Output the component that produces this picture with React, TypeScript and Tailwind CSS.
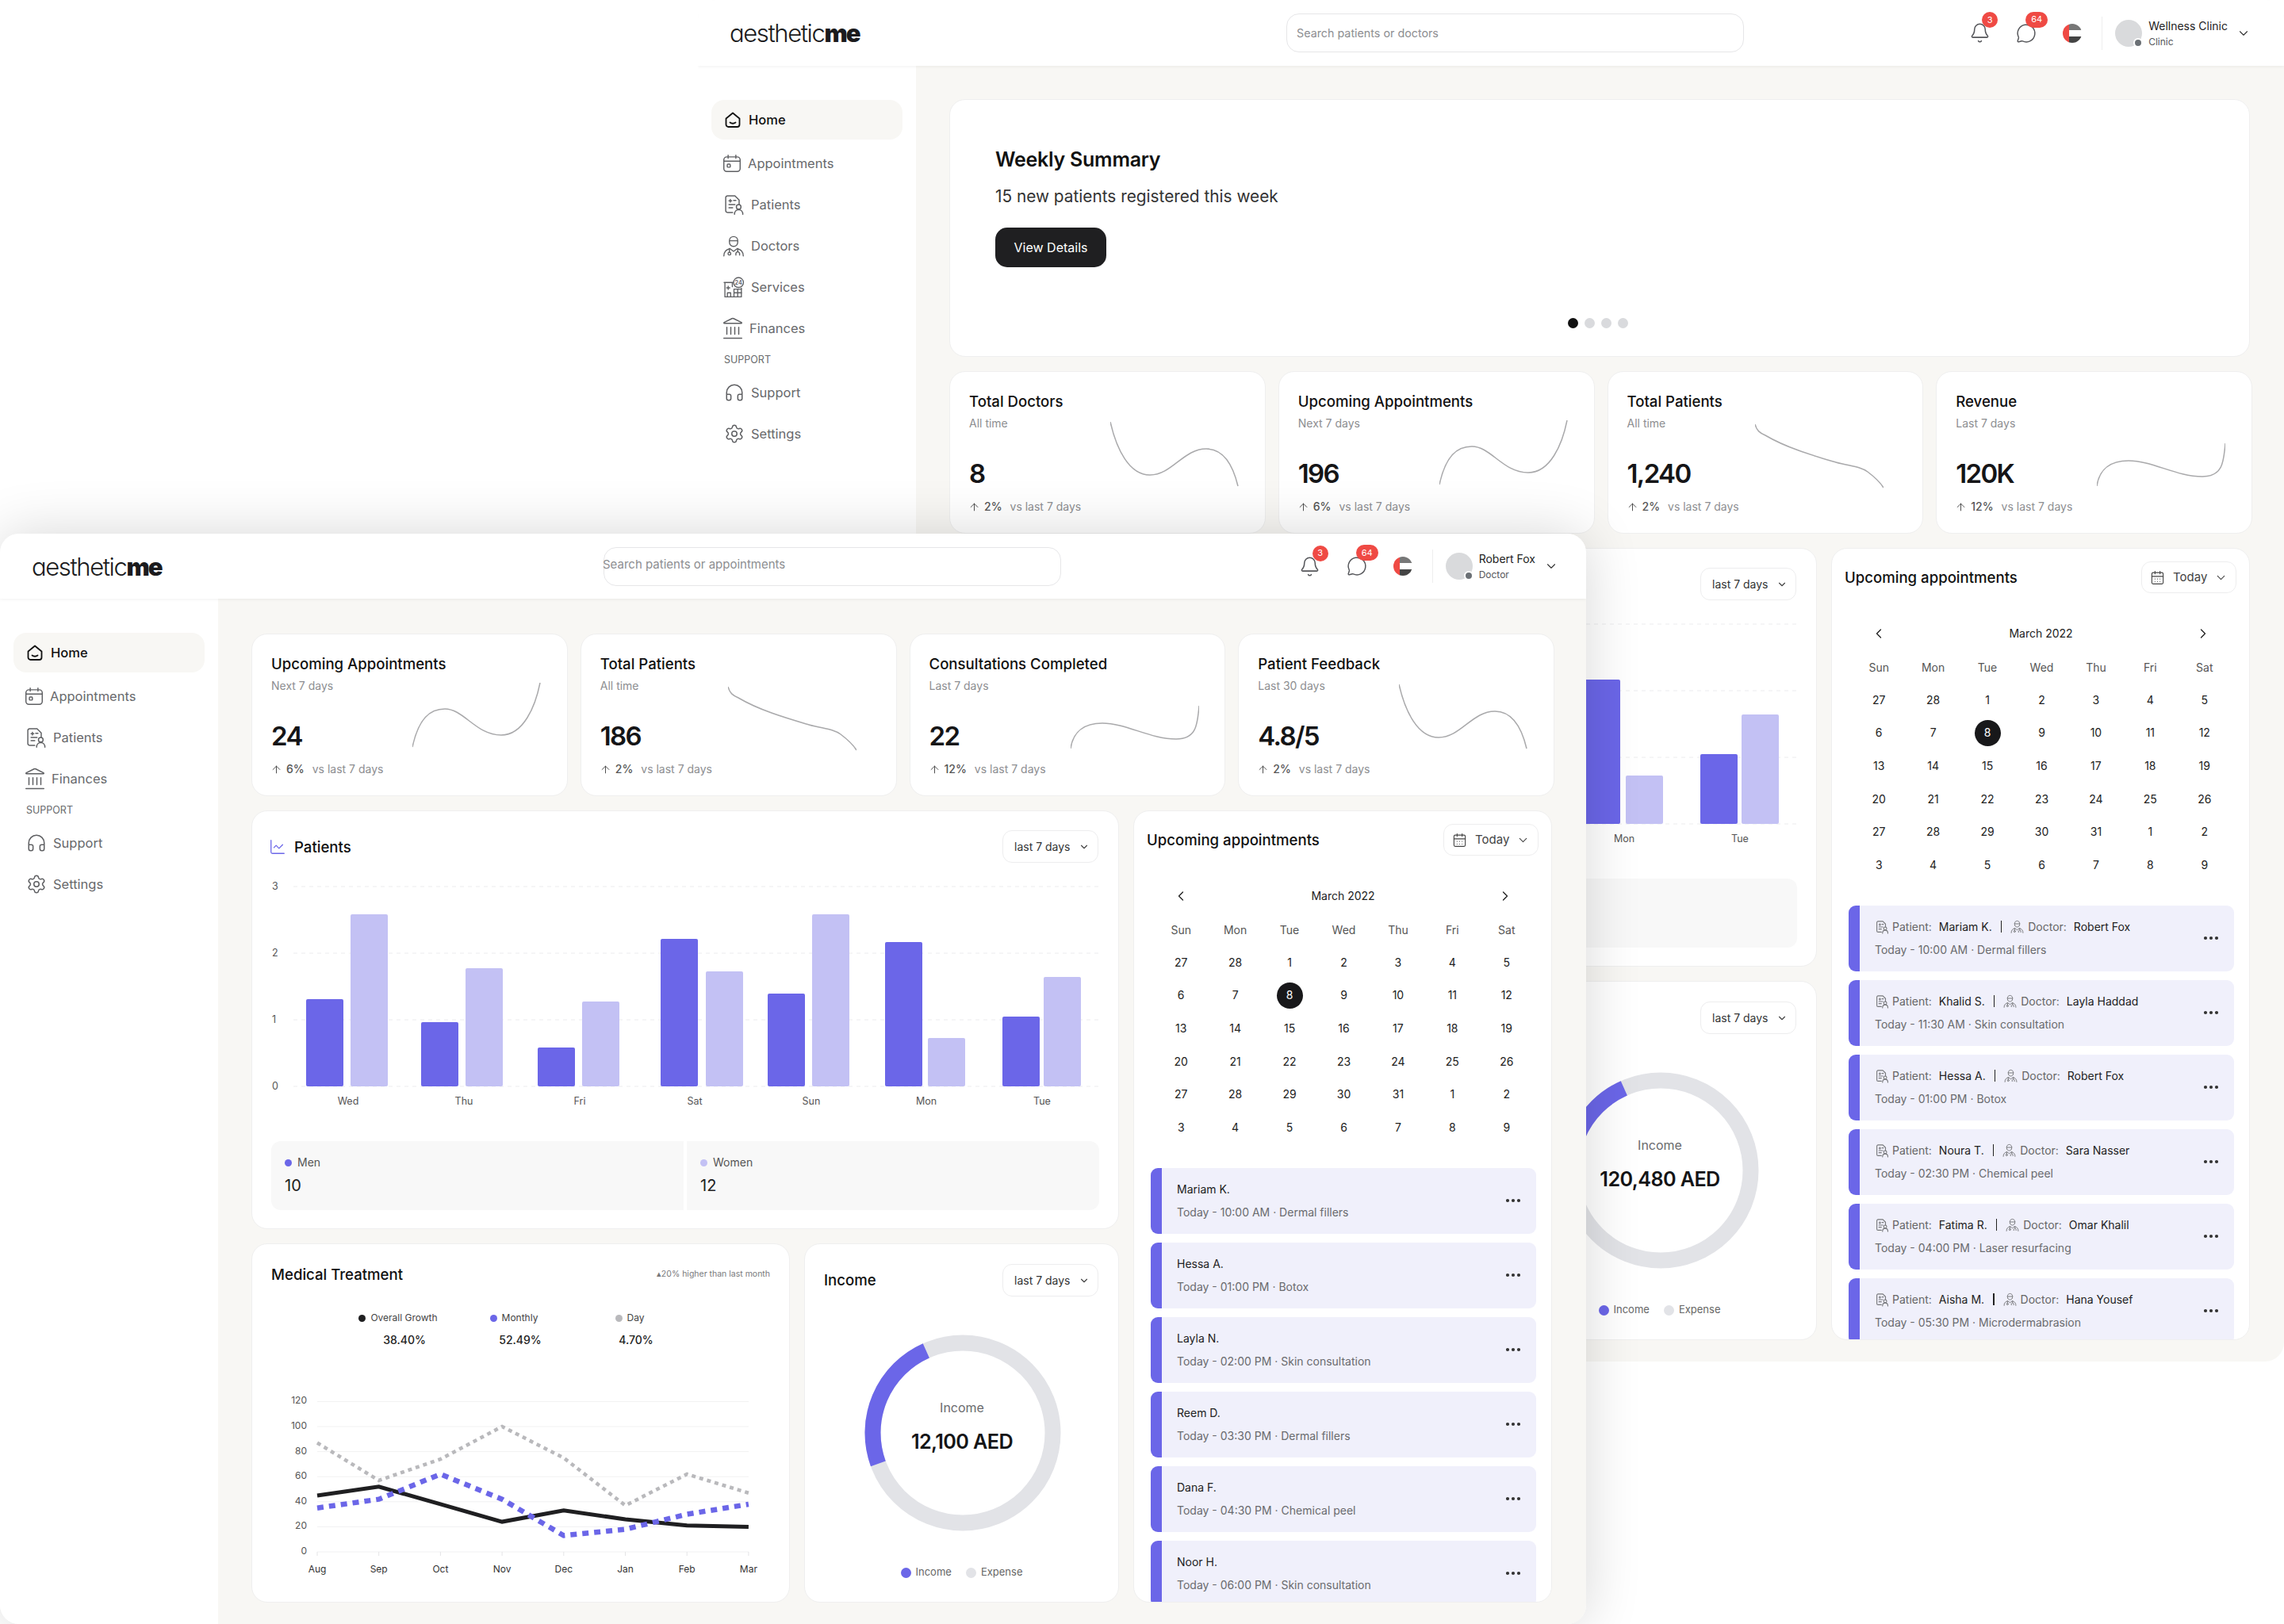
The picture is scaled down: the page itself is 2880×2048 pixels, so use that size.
import React from "react"
import { ArrowUp, Bell, CalendarDays, ChartLine, ChevronDown, ChevronLeft, ChevronRight, Ellipsis, Headphones, Landmark, MessageCircle, Settings } from "lucide-react"

const IC = { fill: "none", stroke: "currentColor", strokeWidth: 1.5, strokeLinecap: "round", strokeLinejoin: "round" } as const

const HomeIcon = () => (
    <svg width="24" height="24" viewBox="0 0 24 24" {...IC} strokeWidth={1.8}>
        <path d="M3.5 10.5 12 3.500l8.500 7V18a3 3 0 0 1-3 3h-11a3 3 0 0 1-3-3z" />
        <path d="M8.500 15.500c2 1.400 5 1.400 7 0" />
    </svg>
)

const CalendarIcon = () => (
    <svg width="26" height="26" viewBox="0 0 24 24" {...IC} strokeWidth={1.35}>
        <rect x="2.500" y="4.500" width="19" height="17" rx="3.500" />
        <path d="M2.500 9.500h19M7.500 2.500v3.500M16.500 2.500v3.500" />
        <rect x="6.500" y="13" width="3.500" height="3.500" rx="0.800" />
    </svg>
)

const PatientIcon = ({ size = 28 }: { size?: number }) => (
    <svg width={size} height={size} viewBox="0 0 24 24" {...IC} strokeWidth={size > 20 ? 1.25 : 1.5}>
        <path d="M11 20.500H5.500a2 2 0 0 1-2-2v-14a2 2 0 0 1 2-2h8l4.500 4.500v5" />
        <path d="M7 8h3M8.500 6.500v3M12 7.500h2.500M7 12h6.500M7 15.500h4" />
        <circle cx="17.500" cy="14.500" r="2.500" />
        <path d="M13 22.500c0-3 2-5 4.500-5s4.500 2 4.500 5" />
    </svg>
)

const DoctorIcon = ({ size = 28 }: { size?: number }) => (
    <svg width={size} height={size} viewBox="0 0 24 24" {...IC} strokeWidth={size > 20 ? 1.2 : 1.4}>
        <path d="M7.500 6.500C7.500 3.800 9.500 2 12 2s4.500 1.800 4.500 4.500zM7.500 6.500v1.500c0 2.800 2 4.700 4.500 4.700s4.500-1.900 4.500-4.700V6.500" />
        <path d="M1.500 23c0-4.500 2.500-7 6.500-8l4 3 4-3c4 1 6.500 3.500 6.500 8" />
        <path d="M7.500 15v4M16.500 15v3l2 2v2M16.500 18l-2 2v2" />
        <circle cx="7.500" cy="20.500" r="1.500" />
    </svg>
)

const ServicesIcon = () => (
    <svg width="27" height="27" viewBox="0 0 26 26" {...IC} strokeWidth={1.3}>
        <path d="M1 7h11M2 7v17.500h20V14M11 7v5" />
        <path d="M6 11.500v4M4 13.500h4M5 24.500v-5h4v5M13 24.500V15h9M13 19.500h9M17.500 15v9.500" />
        <circle cx="18.500" cy="7" r="6" fill="#fff" />
        <text x="18.500" y="9.500" textAnchor="middle" fontSize="7" fontWeight="600" fill="currentColor" stroke="none">24</text>
    </svg>
)

type NavItem = { label: string; icon: React.ReactNode; box: string }

const NAV_TOP: Record<string, NavItem> = {
    appointments: { label: "Appointments", icon: <CalendarIcon />, box: "-ml-[3px] w-[33px]" },
    patients: { label: "Patients", icon: <PatientIcon />, box: "-ml-[2px] w-[36px]" },
    doctors: { label: "Doctors", icon: <DoctorIcon />, box: "-ml-[2px] w-[36px]" },
    services: { label: "Services", icon: <ServicesIcon />, box: "-ml-px w-[35px]" },
    finances: { label: "Finances", icon: <Landmark size={30} strokeWidth={1.2} />, box: "-ml-1 w-[36px]" },
}

const NavRow = ({ item }: { item: NavItem }) => (
    <div className="flex h-[52px] items-center pl-[33px] text-[16.5px] text-[#68696c]">
        <div className={`flex shrink-0 items-center text-[#5f6063] ${item.box}`}>{item.icon}</div>
        {item.label}
    </div>
)

function Sidebar({ items }: { items: string[] }) {
    return (
        <div className="w-[275px] shrink-0 bg-white pt-[43px]">
            <div className="mx-[17px] mb-[4px] flex h-[50px] items-center rounded-[16px] bg-[#f8f7f4] pl-[15px] text-[16.5px] font-medium text-[#111]">
                <div className="w-[32px]"><HomeIcon /></div>
                Home
            </div>
            {items.map(k => <NavRow key={k} item={NAV_TOP[k]} />)}
            <div className="flex h-[29px] items-center pl-[33px] text-[12.5px] text-[#68696c]">SUPPORT</div>
            <NavRow item={{ label: "Support", icon: <Headphones size={26} strokeWidth={1.4} />, box: "w-[34px]" }} />
            <NavRow item={{ label: "Settings", icon: <Settings size={26} strokeWidth={1.4} />, box: "w-[34px]" }} />
        </div>
    )
}

function Flag() {
    return (
        <div className="flex h-6 w-6 overflow-hidden rounded-full">
            <div className="w-2 bg-[#ef4a44]" />
            <div className="flex flex-1 flex-col">
                <div className="flex-1 bg-[#777]" />
                <div className="flex-1 bg-white" />
                <div className="flex-1 bg-[#444]" />
            </div>
        </div>
    )
}

type HeaderProps = { placeholder: string; name: string; role: string; searchClass: string; padClass: string; h: string }

function Header({ placeholder, name, role, searchClass, padClass, h }: HeaderProps) {
    return (
        <div className={`relative z-10 flex shrink-0 items-center bg-white pl-[40px] shadow-[0_1px_4px_rgba(0,0,0,0.06)] ${h} ${padClass}`}>
            <div className="w-[164px] text-[31px] leading-none tracking-[-0.045em] font-light text-[#1b1b1d] [font-feature-settings:'cv11']">
                aesthetic<span className="font-black tracking-[-0.06em]">me</span>
            </div>
            <div className={`flex h-[49px] w-[577px] items-center rounded-[16px] border border-[#e6e6e8] text-[#8d8e91] ${searchClass}`}>{placeholder}</div>
            <div className="ml-auto flex items-center">
                <div className="relative flex w-[26px] justify-center text-[#55565a]">
                    <Bell size={27} strokeWidth={1.35} className="shrink-0" />
                    <span className="absolute -top-[13px] left-[16px] flex h-5 w-5 items-center justify-center rounded-full bg-[#ef4a44] text-[11px] text-white">3</span>
                </div>
                <div className="relative ml-[33px] flex w-[26px] justify-center text-[#55565a]">
                    <MessageCircle size={26} strokeWidth={1.35} className="shrink-0" />
                    <span className="absolute -top-[14px] left-[12px] flex h-5 w-[28px] items-center justify-center rounded-full bg-[#ef4a44] text-[11px] text-white">64</span>
                </div>
                <div className="ml-[33px]"><Flag /></div>
                <div className="ml-[25px] h-[42px] w-px bg-[#eeeeee]" />
                <div className="relative ml-[16px] h-[34px] w-[34px] rounded-full bg-[#d9dadc]">
                    <span className="absolute -bottom-px -right-px h-[12px] w-[12px] rounded-full border-2 border-white bg-[#6b7075]" />
                </div>
                <div className="ml-[8px] flex flex-col">
                    <span className="text-sm leading-5 text-[#222]">{name}</span>
                    <span className="mt-0.5 text-xs leading-4 text-[#55565a]">{role}</span>
                </div>
                <ChevronDown size={18} strokeWidth={1.5} className="ml-[11px] text-[#333]" />
            </div>
        </div>
    )
}

type Stat = { title: string; sub: string; value: string; pct: string; spark: "a" | "b" | "c" | "d" }

const SPARKS = {
    a: { d: "M0 81C8 45 22 33 41 33C65 33 80 66 112 66C140 66 155 30 161 0", h: 82, text: "w-[178px]", top: "mt-[61px]" },
    b: { d: "M0 0C2 8 6 11 13 14C40 30 75 40 102 48C120 53 133 53 142 60C150 66 157 72 162 80", h: 81, text: "w-[161px]", top: "mt-[66px]" },
    c: { d: "M0 54C3 32 18 22 40 22C70 22 100 42 133 42C158 42 160 25 162 0", h: 55, text: "w-[178px]", top: "mt-[90px]" },
    d: { d: "M0 0C8 35 24 67 50 67C78 67 92 34 121 34C145 34 156 60 161 81", h: 82, text: "w-[178px]", top: "mt-[63px]" },
}

function StatCard({ s }: { s: Stat }) {
    const sp = SPARKS[s.spark]
    return (
        <div className="flex h-full rounded-[20px] border border-[#efefef] bg-white pl-6">
            <div className={`shrink-0 whitespace-nowrap pt-[25px] ${sp.text}`}>
                <div className="text-[18.6px] leading-6 font-medium text-[#111]">{s.title}</div>
                <div className="mt-1 text-sm leading-6 text-[#8d8e91]">{s.sub}</div>
                <div className="mt-[31px] h-10 text-[33px] leading-10 font-semibold tracking-[-0.05em] text-[#151517]">{s.value}</div>
                <div className="mt-3 flex h-5 items-center text-sm text-[#8d8e91]">
                    <ArrowUp size={15} strokeWidth={1.5} className="-ml-px text-[#444]" />
                    <span className="ml-[5px] mr-2.5 font-medium text-[#555]">{s.pct}</span>
                    vs last 7 days
                </div>
            </div>
            <svg width="162" height={sp.h} viewBox={`0 0 162 ${sp.h}`} className={`shrink-0 ${sp.top}`} fill="none">
                <path d={sp.d} stroke="#a9a9ab" strokeWidth="1.5" />
            </svg>
        </div>
    )
}

const Dropdown = ({ className = "" }: { className?: string }) => (
    <div className={`flex h-[41px] w-[121px] shrink-0 items-center rounded-[12px] border border-[#ededee] pl-[14px] text-sm text-[#333] ${className}`}>
        last 7 days
        <ChevronDown size={14} className="ml-[10px] text-[#444]" />
    </div>
)

const BARS = [
    { day: "Wed", cx: 121, a: [68, 110], b: [124, 217] },
    { day: "Thu", cx: 267, a: [213, 81], b: [269, 149] },
    { day: "Fri", cx: 413, a: [360, 49], b: [416, 107] },
    { day: "Sat", cx: 558, a: [515, 186], b: [572, 145] },
    { day: "Sun", cx: 705, a: [650, 117], b: [706, 217] },
    { day: "Mon", cx: 850, a: [798, 182], b: [852, 61] },
    { day: "Tue", cx: 996, a: [946, 88], b: [998, 138] },
]

function PatientsCard() {
    const base = 269
    return (
        <div className="h-[528px] rounded-[20px] border border-[#efefef] bg-white">
            <div className="flex items-center justify-between pl-6 pr-[25px] pt-6">
                <div className="mt-0.5 flex items-center gap-[10px] text-[18.6px] font-medium text-[#111]">
                    <ChartLine size={22} strokeWidth={1.4} className="-ml-[3px] text-[#6b66e8]" />
                    Patients
                </div>
                <Dropdown />
            </div>
            <svg width="1093" height="300" viewBox="0 0 1093 300" className="mt-[13px] block">
                {[0, 1, 2, 3].map(i => (
                    <g key={i}>
                        <line x1="52" x2="1068" y1={base - i * 84} y2={base - i * 84} stroke="#ececee" strokeDasharray="5 5" />
                        <text x="25" y={base - i * 84 + 4} fontSize="12.5" fill="#555">{i}</text>
                    </g>
                ))}
                {BARS.map(b => (
                    <g key={b.day}>
                        <rect x={b.a[0]} y={base - b.a[1]} width="47" height={b.a[1]} rx="2" fill="#6b66e8" />
                        <rect x={b.b[0]} y={base - b.b[1]} width="47" height={b.b[1]} rx="2" fill="#c3c1f4" />
                        <text x={b.cx} y={base + 23} textAnchor="middle" fontSize="12.5" fill="#555">{b.day}</text>
                    </g>
                ))}
            </svg>
            <div className="mx-6 mt-[38px] grid h-[87px] grid-cols-2 gap-1">
                <div className="rounded-l-[12px] bg-[#f8f8f8] pl-[17px] pt-[15px]">
                    <div className="flex items-center gap-[7px] text-sm leading-6 text-[#555]"><span className="h-[9px] w-[9px] rounded-full bg-[#6b66e8]" />Men</div>
                    <div className="mt-[3px] text-[20px] leading-7 text-[#222]">10</div>
                </div>
                <div className="rounded-r-[12px] bg-[#f8f8f8] pl-[17px] pt-[15px]">
                    <div className="flex items-center gap-[7px] text-sm leading-6 text-[#555]"><span className="h-[9px] w-[9px] rounded-full bg-[#c3c1f4]" />Women</div>
                    <div className="mt-[3px] text-[20px] leading-7 text-[#222]">12</div>
                </div>
            </div>
        </div>
    )
}

const SERIES = [
    { vals: [87, 57, 74, 100, 75, 37, 62, 47], color: "#b9b9bc", w: 4.5, dash: "5 5" },
    { vals: [45, 52, 38, 24, 33, 26, 21, 20], color: "#1f1f21", w: 5, dash: undefined },
    { vals: [35, 42, 62, 42, 13, 18, 30, 38], color: "#6b66e8", w: 6.5, dash: "8 7" },
]
const MONTHS = ["Aug", "Sep", "Oct", "Nov", "Dec", "Jan", "Feb", "Mar"]

function MedicalCard() {
    const x = (i: number) => 82 + i * 77.7
    const y = (v: number) => 217 - v * 1.58
    const legend = [
        { label: "Overall Growth", value: "38.40%", dot: "bg-[#1f1f21]" },
        { label: "Monthly", value: "52.49%", dot: "bg-[#6b66e8]" },
        { label: "Day", value: "4.70%", dot: "bg-[#b9b9bc]" },
    ]
    return (
        <div className="h-[453px] w-[679px] rounded-[20px] border border-[#efefef] bg-white">
            <div className="flex items-center justify-between pl-6 pr-6 pt-[26px]">
                <span className="text-[18.6px] leading-6 font-medium text-[#111]">Medical Treatment</span>
                <span className="text-[10.5px] text-[#77787b]">▴20% higher than last month</span>
            </div>
            <div className="ml-[119px] mt-[33px] grid w-[438px] grid-cols-3">
                {legend.map(l => (
                    <div key={l.label} className="flex flex-col items-center">
                        <div className="flex h-5 items-center gap-1.5 pr-4 text-xs text-[#444]"><span className={`h-[9px] w-[9px] rounded-full ${l.dot}`} />{l.label}</div>
                        <div className="mt-1.5 text-sm leading-6 font-medium text-[#222]">{l.value}</div>
                    </div>
                ))}
            </div>
            <svg width="678" height="260" viewBox="0 0 678 260" className="mt-[38px] block">
                {[0, 20, 40, 60, 80, 100, 120].map(v => (
                    <g key={v}>
                        <line x1="82" x2="626" y1={y(v)} y2={y(v)} stroke="#f1f1f2" />
                        <text x="69" y={y(v) + 3} textAnchor="end" fontSize="12" fill="#555">{v}</text>
                    </g>
                ))}
                {MONTHS.map((m, i) => (
                    <g key={m}>
                        <line x1={x(i)} x2={x(i)} y1="217" y2="222" stroke="#e4e4e6" />
                        <text x={x(i)} y="243" textAnchor="middle" fontSize="12" fill="#333">{m}</text>
                    </g>
                ))}
                {SERIES.map(s => (
                    <polyline key={s.color} points={s.vals.map((v, i) => `${x(i)},${y(v)}`).join(" ")} fill="none" stroke={s.color} strokeWidth={s.w} strokeDasharray={s.dash} />
                ))}
            </svg>
        </div>
    )
}

function IncomeCard({ amount }: { amount: string }) {
    return (
        <div className="h-[453px] w-[397px] rounded-[20px] border border-[#efefef] bg-white">
            <div className="flex items-center justify-between pl-6 pr-[25px] pt-[25px]">
                <span className="text-[18.6px] font-medium text-[#111]">Income</span>
                <Dropdown />
            </div>
            <svg width="397" height="260" viewBox="0 0 397 260" className="mt-[42px] block">
                <circle cx="199" cy="130" r="113.5" fill="none" stroke="#e2e3e7" strokeWidth="20" />
                <circle cx="199" cy="130" r="113.5" fill="none" stroke="#6b66e8" strokeWidth="20" strokeDasharray="170 543" transform="rotate(-200 199 130)" />
                <text x="198" y="104" textAnchor="middle" fontSize="16" fill="#6a6b6e">Income</text>
                <text x="198" y="150" textAnchor="middle" fontSize="25.2" fontWeight="600" letterSpacing="-0.6" fill="#151517">{amount}</text>
            </svg>
            <div className="mt-[36px] flex h-5 items-center justify-center text-[13px] text-[#666]">
                <span className="h-[13px] w-[13px] rounded-full bg-[#6b66e8]" />
                <span className="ml-[6px]">Income</span>
                <span className="ml-[18px] h-[13px] w-[13px] rounded-full bg-[#e2e3e7]" />
                <span className="ml-[6px]">Expense</span>
            </div>
        </div>
    )
}

const WEEK = ["Sun", "Mon", "Tue", "Wed", "Thu", "Fri", "Sat"]
const DAYS = [27, 28, 1, 2, 3, 4, 5, 6, 7, 8, 9, 10, 11, 12, 13, 14, 15, 16, 17, 18, 19, 20, 21, 22, 23, 24, 25, 26, 27, 28, 29, 30, 31, 1, 2, 3, 4, 5, 6, 7, 8, 9]

type Appt = { who?: string; patient?: string; doctor?: string; sub: string }

function ApptRow({ a }: { a: Appt }) {
    return (
        <div className="flex h-[83px] shrink-0 overflow-hidden rounded-[9px] bg-[#f0f0fb]">
            <div className="w-[14px] shrink-0 bg-[#6b66e8]" />
            <div className="flex-1 pl-[19px] pt-4 text-sm leading-[22px]">
                {a.who ? (
                    <div className="text-[#222]">{a.who}</div>
                ) : (
                    <div className="flex items-center text-[#222]">
                        <span className="text-[#77787b]"><PatientIcon size={18} /></span>
                        <span className="ml-[4px] mr-[9px] text-[#666]">Patient:</span>
                        {a.patient}
                        <span className="mx-[11px] h-[15px] w-[1.5px] bg-[#222]" />
                        <span className="text-[#77787b]"><DoctorIcon size={17} /></span>
                        <span className="ml-[5px] mr-[9px] text-[#666]">Doctor:</span>
                        {a.doctor}
                    </div>
                )}
                <div className="mt-[7px] text-[#6a6b6e]">{a.sub}</div>
            </div>
            <div className="flex w-[58px] shrink-0 items-center justify-center">
                <Ellipsis size={24} strokeWidth={2.2} className="text-[#333]" />
            </div>
        </div>
    )
}

function UpcomingCard({ appts }: { appts: Appt[] }) {
    return (
        <div className="h-[999px] w-[528px] overflow-hidden rounded-[20px] border border-[#efefef] bg-white">
            <div className="flex items-center justify-between px-4 pt-4">
                <span className="mt-0.5 text-[18.6px] font-medium text-[#111]">Upcoming appointments</span>
                <div className="flex h-10 w-[120px] items-center rounded-[12px] border border-[#ededee] pl-[10px] text-[15px] text-[#444]">
                    <CalendarDays size={19} strokeWidth={1.4} />
                    <span className="ml-[10px]">Today</span>
                    <ChevronDown size={17} strokeWidth={1.6} className="ml-[9px]" />
                </div>
            </div>
            <div className="ml-[25px] w-[479px]">
                <div className="mt-[39px] flex h-6 items-center justify-between pl-6 pr-[26px] text-sm text-[#222]">
                    <ChevronLeft size={20} strokeWidth={1.6} />
                    March 2022
                    <ChevronRight size={20} strokeWidth={1.6} />
                </div>
                <div className="mt-[19px] grid h-6 grid-cols-7 items-center text-center text-sm text-[#555]">
                    {WEEK.map(d => <div key={d}>{d}</div>)}
                </div>
                <div className="mt-2 grid grid-cols-7 auto-rows-[41.6px] items-center justify-items-center text-sm text-[#222]">
                    {DAYS.map((d, i) => i === 9 ? (
                        <div key={i} className="flex h-[33px] w-[33px] items-center justify-center rounded-full bg-[#18181a] text-white">{d}</div>
                    ) : <div key={i}>{d}</div>)}
                </div>
            </div>
            <div className="ml-[21px] mt-[30px] flex w-[486px] flex-col gap-[11px]">
                {appts.map(a => <ApptRow key={a.sub} a={a} />)}
            </div>
        </div>
    )
}

const FRONT_STATS: Stat[] = [
    { title: "Upcoming Appointments", sub: "Next 7 days", value: "24", pct: "6%", spark: "a" },
    { title: "Total Patients", sub: "All time", value: "186", pct: "2%", spark: "b" },
    { title: "Consultations Completed", sub: "Last 7 days", value: "22", pct: "12%", spark: "c" },
    { title: "Patient Feedback", sub: "Last 30 days", value: "4.8/5", pct: "2%", spark: "d" },
]

const BACK_STATS: Stat[] = [
    { title: "Total Doctors", sub: "All time", value: "8", pct: "2%", spark: "d" },
    { title: "Upcoming Appointments", sub: "Next 7 days", value: "196", pct: "6%", spark: "a" },
    { title: "Total Patients", sub: "All time", value: "1,240", pct: "2%", spark: "b" },
    { title: "Revenue", sub: "Last 7 days", value: "120K", pct: "12%", spark: "c" },
]

const FRONT_APPTS: Appt[] = [
    { who: "Mariam K.", sub: "Today - 10:00 AM · Dermal fillers" },
    { who: "Hessa A.", sub: "Today - 01:00 PM · Botox" },
    { who: "Layla N.", sub: "Today - 02:00 PM · Skin consultation" },
    { who: "Reem D.", sub: "Today - 03:30 PM · Dermal fillers" },
    { who: "Dana F.", sub: "Today - 04:30 PM · Chemical peel" },
    { who: "Noor H.", sub: "Today - 06:00 PM · Skin consultation" },
]

const BACK_APPTS: Appt[] = [
    { patient: "Mariam K.", doctor: "Robert Fox", sub: "Today - 10:00 AM · Dermal fillers" },
    { patient: "Khalid S.", doctor: "Layla Haddad", sub: "Today - 11:30 AM · Skin consultation" },
    { patient: "Hessa A.", doctor: "Robert Fox", sub: "Today - 01:00 PM · Botox" },
    { patient: "Noura T.", doctor: "Sara Nasser", sub: "Today - 02:30 PM · Chemical peel" },
    { patient: "Fatima R.", doctor: "Omar Khalil", sub: "Today - 04:00 PM · Laser resurfacing" },
    { patient: "Aisha M.", doctor: "Hana Yousef", sub: "Today - 05:30 PM · Microdermabrasion" },
]

function Dashboard({ stats, amount, appts }: { stats: Stat[]; amount: string; appts: Appt[] }) {
    return (
        <>
            <div className="grid h-[205px] grid-cols-4 gap-4">
                {stats.map(s => <StatCard key={s.title} s={s} />)}
            </div>
            <div className="mt-[18px] flex gap-[18px]">
                <div className="flex w-[1094px] flex-col gap-[18px]">
                    <PatientsCard />
                    <div className="flex gap-[18px]">
                        <MedicalCard />
                        <IncomeCard amount={amount} />
                    </div>
                </div>
                <UpcomingCard appts={appts} />
            </div>
        </>
    )
}

export default function App() {
    return (
        <div className="relative h-[2048px] w-[2880px] overflow-hidden bg-white font-['Inter',sans-serif]">
            {/* window at the back */}
            <div className="absolute left-[880px] top-0 flex h-[1717px] w-[2000px] flex-col overflow-hidden rounded-[24px] bg-white">
                <Header placeholder="Search patients or doctors" name="Wellness Clinic" role="Clinic" h="h-[83px]" searchClass="ml-[538px] pl-3 text-[14.3px]" padClass="pr-[42px]" />
                <div className="flex flex-1">
                    <Sidebar items={["appointments", "patients", "doctors", "services", "finances"]} />
                    <div className="flex-1 bg-[#f8f7f4] pl-[42px] pt-[42px]">
                        <div className="h-[325px] w-[1640px] rounded-[20px] border border-[#efefef] bg-white pl-[57px] pt-[57px]">
                            <div className="text-[25px] leading-9 font-semibold tracking-[-0.01em] text-[#111]">Weekly Summary</div>
                            <div className="mt-[15px] text-[20.8px] leading-7 text-[#333]">15 new patients registered this week</div>
                            <div className="mt-[25px] flex h-[50px] w-[140px] items-center justify-center rounded-[15px] bg-[#1f1f21] text-base text-white">View Details</div>
                            <div className="ml-[722px] mt-[64px] flex gap-2">
                                <span className="h-[13px] w-[13px] rounded-full bg-[#111]" />
                                <span className="h-[13px] w-[13px] rounded-full bg-[#d9dadd]" />
                                <span className="h-[13px] w-[13px] rounded-full bg-[#d9dadd]" />
                                <span className="h-[13px] w-[13px] rounded-full bg-[#d9dadd]" />
                            </div>
                        </div>
                        <div className="mt-[18px] w-[1643px]">
                            <Dashboard stats={BACK_STATS} amount="120,480 AED" appts={BACK_APPTS} />
                        </div>
                    </div>
                </div>
            </div>

            {/* window in front */}
            <div className="absolute left-0 top-[673px] flex h-[1375px] w-[2000px] flex-col overflow-hidden rounded-[24px] bg-white shadow-[0_0_70px_rgba(0,0,0,0.16)]">
                <Header placeholder="Search patients or appointments" name="Robert Fox" role="Doctor" h="h-[82px]" searchClass="ml-[557px] pb-1 indent-[-2px] text-[15px]" padClass="pr-[35px]" />
                <div className="flex flex-1">
                    <Sidebar items={["appointments", "patients", "finances"]} />
                    <div className="flex-1 bg-[#f8f7f4] pl-[42px] pt-[44px]">
                        <div className="w-[1643px]">
                            <Dashboard stats={FRONT_STATS} amount="12,100 AED" appts={FRONT_APPTS} />
                        </div>
                    </div>
                </div>
            </div>
        </div>
    )
}
